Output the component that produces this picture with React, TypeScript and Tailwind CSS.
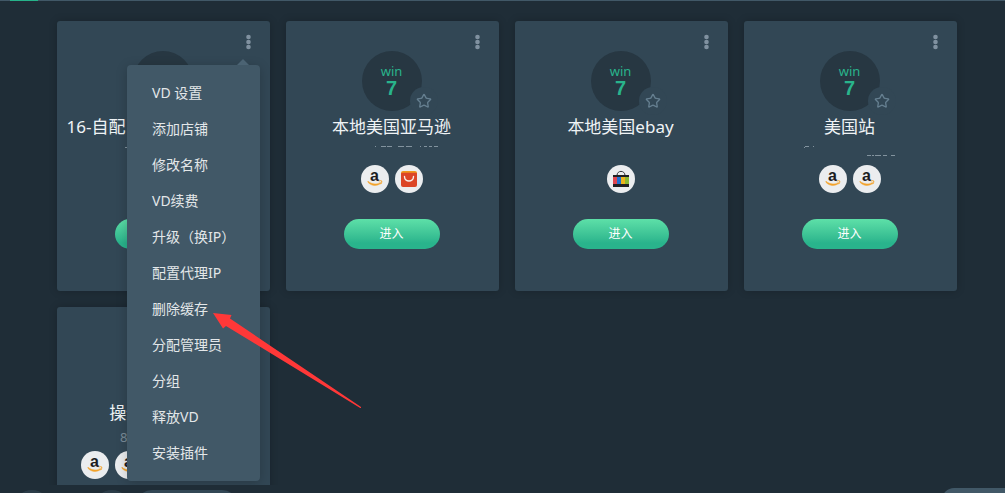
import React from 'react';
import { Star } from 'lucide-react';

type Shop = 'amazon' | 'aliexpress' | 'ebay';

interface Device {
  name: string;
  address?: string;
  trace?: string;
  shops: Shop[];
}

const devices: Device[] = [
  {
    name: '16-自配 环境本地美国站1',
    trace: 'M68 4.5h2',
    shops: ['amazon'],
  },
  {
    name: '本地美国亚马逊',
    trace: 'M89 3.5h1M95 3.5h5M101 3.5h5M112 3.5h6M120 3.5h6M134 3.5h1M138 3.5h3M143 3.5h3M148 3.5h4',
    shops: ['amazon', 'aliexpress'],
  },
  {
    name: '本地美国ebay',
    shops: ['ebay'],
  },
  {
    name: '美国站',
    trace: 'M60 4.5h1M61 3.5h4M69 3.5h1M123 12.5h4M128 12.5h2M131 12.5h6M139 12.5h4M147 12.5h4',
    shops: ['amazon', 'amazon'],
  },
  {
    name: '操作测试 店铺',
    address: '8.210.143.106',
    shops: ['amazon', 'amazon', 'amazon', 'amazon', 'amazon'],
  },
];

const menuItems = [
  'VD 设置',
  '添加店铺',
  '修改名称',
  'VD续费',
  '升级（换IP）',
  '配置代理IP',
  '删除缓存',
  '分配管理员',
  '分组',
  '释放VD',
  '安装插件',
];

const AmazonIcon: React.FC = () => (
  <svg viewBox="0 0 28 28" className="size-7">
    <text x="13.5" y="16" textAnchor="middle" fontSize="16" fontWeight="700" fill="#1d1d1f" fontFamily="Liberation Sans, sans-serif">a</text>
    <path d="M7 16.3c4 3.2 9 3.4 12.4 1.1l.5.8c-4 3.4-9.8 2.9-13.2-1.2z" fill="#f3a22b" stroke="#f3a22b" strokeWidth=".5" />
    <path d="M17.8 16.1c1.2-.6 2.4-.6 3 -.1.1 1.1-.3 2.3-1.1 3.2" fill="none" stroke="#f3a22b" strokeWidth="1" />
  </svg>
);

const AliexpressIcon: React.FC = () => (
  <svg viewBox="0 0 28 28" className="size-7">
    <path d="M6 9V8a2 2 0 0 1 2-2h12a2 2 0 0 1 2 2v1z" fill="#f0961e" />
    <path d="M6 8.5q0-.7 1-.7h14q1 0 1 .7V20a2 2 0 0 1-2 2H8a2 2 0 0 1-2-2z" fill="#dc4526" />
    <path d="M9.5 11.5c0 6 9 6 9 0" fill="none" stroke="#f8eeea" strokeWidth="1.4" strokeLinecap="round" />
  </svg>
);

const EbayIcon: React.FC = () => (
  <svg viewBox="0 0 28 28" className="size-7">
    <path d="M10 10.5c0-5.5 8-5.5 8 0" fill="none" stroke="#33363a" strokeWidth="1" />
    <path d="M6 10h16v12H6z" fill="#1f1f22" />
    <path d="M6 12h4v7H6z" fill="#de4650" />
    <path d="M10 12h4v7h-4z" fill="#1f70d0" />
    <path d="M14 12h4v7h-4z" fill="#ecb41c" />
    <path d="M18 12h4v7h-4z" fill="#8ab833" />
  </svg>
);

const shopIcons: Record<Shop, React.FC> = {
  amazon: AmazonIcon,
  aliexpress: AliexpressIcon,
  ebay: EbayIcon,
};

const ActionMenu: React.FC = () => (
  <div className="absolute top-11 right-2.5 z-10 w-[133px] rounded bg-[#415867] py-2.5 shadow-[0_2px_12px_rgba(0,0,0,0.2)]">
    <div className="absolute -top-1.5 right-[11px] border-x-6 border-b-6 border-x-transparent border-b-[#4b6373]" />
    <ul>
      {menuItems.map((item) => (
        <li key={item}>
          <button type="button" className="block h-9 w-full pl-[25px] text-left text-sm leading-9 whitespace-nowrap text-[#e3e7e9]">
            {item}
          </button>
        </li>
      ))}
    </ul>
  </div>
);

const DeviceCard: React.FC<{ device: Device; menuOpen: boolean }> = ({ device, menuOpen }) => (
  <article className="relative flex flex-col items-center rounded-[3px] bg-[#324755] pt-[30px] pr-0.5 pb-[42px] shadow-[0_0_8px_rgba(0,0,0,0.2)]">
    <button type="button" aria-label="更多" className="absolute top-3 right-4 flex h-[18px] w-[11px] items-center justify-center">
      <svg viewBox="0 0 5 16" className="h-4 w-[5px]" fill="#8091a0">
        <circle cx="2.5" cy="3" r="2.3" />
        <circle cx="2.5" cy="8" r="2.3" />
        <circle cx="2.5" cy="13" r="2.3" />
      </svg>
    </button>

    <div className="relative flex size-15 flex-col items-center rounded-full bg-[#273742] pt-3 text-[#29b48c]">
      <span className="text-[13px] leading-4">win</span>
      <span className="font-['Liberation_Sans',sans-serif] text-xl leading-[18px] font-bold">7</span>
      <button type="button" aria-label="收藏" className="absolute -right-4 -bottom-1 flex size-7 items-center justify-center rounded-full bg-[#324755]">
        <Star size={16} strokeWidth={2} className="text-[#657f90]" />
      </button>
    </div>

    <h2 className="h-8 text-[17px] leading-8 whitespace-nowrap text-[#eff3f5]">{device.name}</h2>
    <div className="h-4 w-full text-center text-[13px] leading-4 text-[#7b8c98]">
      {device.address}
      {device.trace && (
        <svg viewBox="0 0 211 16" className="h-4 w-full" fill="none" stroke="#82939e">
          <path d={device.trace} />
        </svg>
      )}
    </div>

    <div className="mt-1.5 flex gap-1.5">
      {device.shops.map((shop, index) => {
        const Icon = shopIcons[shop];
        return (
          <span key={index} className="size-7 rounded-full bg-[#ebedef]">
            <Icon />
          </span>
        );
      })}
    </div>

    <button type="button" className="mt-[26px] h-[30px] w-24 rounded-full bg-linear-to-b from-[#5de0a8] to-[#29b48c] to-80% text-xs text-white">
      进入
    </button>

    {menuOpen && <ActionMenu />}
  </article>
);

const App: React.FC = () => {
  return (
    <div className="relative flex h-screen flex-col overflow-hidden bg-[#1f2d37] font-['Noto_Sans','Noto_Sans_CJK_SC',sans-serif]">
      <div className="h-px shrink-0 bg-[#415867] pl-2.5">
        <div className="h-px w-7 bg-[#26b38a]" />
      </div>

      <main className="min-h-0 flex-1 overflow-hidden pt-5 pr-12 pl-[57px]">
        <div className="grid grid-cols-4 gap-4">
          {devices.map((device, index) => (
            <DeviceCard key={device.name} device={device} menuOpen={index === 0} />
          ))}
        </div>
      </main>

      {/* Bottom bar */}
      <footer className="flex h-2 shrink-0 items-start overflow-hidden pl-3.5">
        <div className="mt-[5px] size-9 shrink-0 rounded-full bg-[#2b3c48]" />
        <div className="mt-[5px] ml-11 size-9 shrink-0 rounded-full bg-[#2b3c48]" />
        <div className="mt-[5px] ml-1.5 h-8 w-[102px] shrink-0 rounded-full bg-[#324755]" />
        <div className="mt-[3px] ml-auto h-8 w-[63px] shrink-0 rounded-tl-xl bg-[#415867]" />
      </footer>

      {/* Pointer to the cache entry */}
      <svg viewBox="0 0 148 96" className="pointer-events-none absolute top-[312px] left-[213px] z-20 h-24 w-[148px]">
        <path d="M0 1L18.5 3L17 6.5L148 95L148 96.5L13 14L10 16.5Z" fill="#ff3838" />
      </svg>
    </div>
  );
};

export default App;
